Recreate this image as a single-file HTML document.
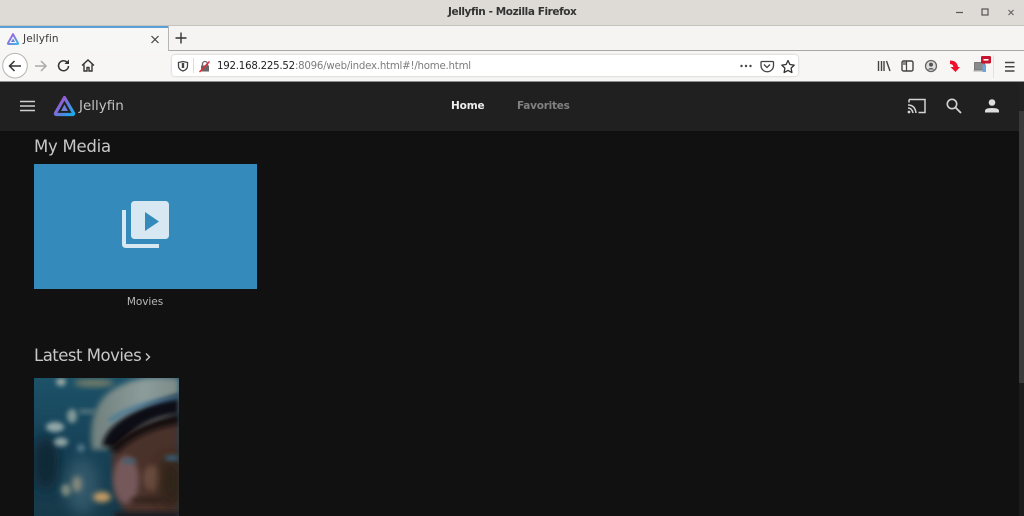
<!DOCTYPE html>
<html><head><meta charset="utf-8">
<style>
html,body{margin:0;padding:0;width:1024px;height:516px;overflow:hidden;background:#111}
body{position:relative;font-family:"DejaVu Sans","Liberation Sans",sans-serif}
div,span,svg{position:absolute;white-space:nowrap}
</style></head><body>
<div style="left:0;top:0;width:1024px;height:26px;background:#dedbd6"></div>
<div style="left:0;top:25px;width:1024px;height:1px;background:#c6c3bd"></div>
<div style="left:448px;top:5px;font:bold 10.5px 'DejaVu Sans',sans-serif;letter-spacing:-.42px;color:#333;line-height:15px">Jellyfin - Mozilla Firefox</div>
<svg style="left:950px;top:4px" width="74" height="16">
<path d="M6 8.500h7" stroke="#555" stroke-width="1.200"/><rect x="32" y="5" width="6" height="6" fill="none" stroke="#555" stroke-width="1.200"/><path d="M58.500 6l5 5M63.500 6l-5 5" stroke="#666" stroke-width="1.200"/></svg>

<div style="left:0;top:26px;width:1024px;height:25px;background:#f5f4f2"></div>
<div style="left:168px;top:50px;width:856px;height:1px;background:#a8a8a6"></div>
<div style="left:0;top:26px;width:168px;height:25px;background:#f7f7f6"></div>
<div style="left:0;top:26px;width:168px;height:2px;background:#5a9fd8"></div>
<div style="left:168px;top:26px;width:1px;height:25px;background:#b5b5b3"></div>
<svg style="left:6px;top:32px" width="14" height="14" viewBox="0 0 14 14"><defs><linearGradient id="g0" x1="0" y1="0" x2="1" y2="1"><stop offset="0" stop-color="#b050d8"/><stop offset="1" stop-color="#40b4ee"/></linearGradient></defs><path d="M7 2.200L12 11.200Q12.200 12 11.300 12H2.700Q1.800 12 2 11.200Z" fill="none" stroke="url(#g0)" stroke-width="2" stroke-linejoin="round"/><path d="M7 6.500L9 10H5Z" fill="#6a7fd8"/></svg>
<div style="left:23px;top:31px;font:10.500px/16px 'DejaVu Sans',sans-serif;letter-spacing:.1px;color:#3a3a3a">Jellyfin</div>
<svg style="left:149px;top:33px" width="12" height="13"><path d="M2.500 3l7 7M9.500 3l-7 7" stroke="#444" stroke-width="1.200"/></svg>
<svg style="left:174px;top:31px" width="14" height="14"><path d="M7 1.500v11M1.500 7h11" stroke="#333" stroke-width="1.400"/></svg>

<div style="left:0;top:51px;width:1024px;height:30px;background:#f7f6f5"></div>
<div style="left:0;top:81px;width:1024px;height:1px;background:#8f8f8d"></div>
<svg style="left:2px;top:52px" width="100" height="28" viewBox="0 0 100 28">
<circle cx="13" cy="13.700" r="12.300" fill="#fff" stroke="#b4b4b2" stroke-width="1"/>
<path d="M19 14H8M12.500 9l-5 5 5 5" fill="none" stroke="#333" stroke-width="1.500"/>
<path d="M44 14H33M39 9l5 5-5 5" fill="none" stroke="#aaa" stroke-width="1.500"/>
<path d="M66.500 14a5 5 0 1 1-1.700-4" fill="none" stroke="#333" stroke-width="1.500"/><path d="M67 7.500v4.500h-4.500z" fill="#333"/>
<path d="M80 13.500l6-5.500 6 5.500M82 12.500v6.500h3v-3.500h2v3.500h3v-6.500" fill="none" stroke="#333" stroke-width="1.400"/>
</svg>
<div style="left:172px;top:55px;width:626px;height:21px;background:#fff;border-radius:3px;box-shadow:0 0 2px rgba(0,0,0,.25)"></div>
<div style="left:193px;top:58px;width:1px;height:15px;background:#ddd"></div>
<svg style="left:176px;top:59px" width="14" height="14"><path d="M2.500 3.500L7 2.500 11.500 3.500v3.500q0 3.500-4.500 5Q2.500 10.500 2.500 7Z" fill="none" stroke="#444" stroke-width="1.300"/><path d="M7 4v5" stroke="#444" stroke-width="2.400"/></svg>
<svg style="left:198px;top:59px" width="14" height="14"><rect x="3" y="6.500" width="8" height="6" fill="#666"/><path d="M4.500 6.500V5a2.500 2.500 0 0 1 5 0v1.500" fill="none" stroke="#666" stroke-width="1.300"/><path d="M1.500 13L11.500 2.500" stroke="#e8293c" stroke-width="1.500"/></svg>
<div style="left:217px;top:59px;font:10.200px/16px 'DejaVu Sans',sans-serif;letter-spacing:-.22px;color:#222">192.168.225.52<span style="position:static;color:#7c7c7c">:8096/web/index.html#!/home.html</span></div>
<svg style="left:738px;top:58px" width="60" height="16">
<circle cx="3.500" cy="8" r="1.200" fill="#444"/><circle cx="8" cy="8" r="1.200" fill="#444"/><circle cx="12.500" cy="8" r="1.200" fill="#444"/>
<path d="M24 3.500h10.500q1 0 1 1v3a6 6 0 0 1-12.500 0V4.500q0-1 1-1Z" fill="none" stroke="#444" stroke-width="1.300"/><path d="M26 6.500l3 3 3-3" fill="none" stroke="#444" stroke-width="1.300"/>
<path d="M50 2.500l1.900 4 4.300.6-3.100 3 .8 4.400-3.900-2.100-3.900 2.100.8-4.400-3.100-3 4.300-.6Z" fill="none" stroke="#333" stroke-width="1.300" stroke-linejoin="round"/></svg>
<svg style="left:870px;top:52px" width="154" height="28" viewBox="0 0 154 28">
<path d="M8.500 9v10M11.500 9v10M14 9v10M16.500 9l3.500 10" fill="none" stroke="#444" stroke-width="1.400"/>
<rect x="32" y="9" width="11" height="10" rx="1.500" fill="none" stroke="#444" stroke-width="1.400"/><path d="M36.500 9v10" stroke="#444" stroke-width="1.200"/><rect x="33" y="10" width="3" height="3" fill="#888"/>
<circle cx="61" cy="14" r="5.500" fill="#ddd" stroke="#666" stroke-width="1.300"/><circle cx="61" cy="12.600" r="2" fill="#555"/><path d="M57.500 17.500q3.500-3 7 0z" fill="#555"/>
<path d="M80 8.500Q87 8.500 88 15h2L85.500 20 80.500 15h3Q83 12 80 12Z" fill="#ee0f2b"/>
<rect x="104.500" y="10.500" width="10" height="7.500" fill="#8a8a8a" stroke="#666" stroke-width=".8"/><rect x="103.500" y="18" width="11" height="1.500" fill="#aaa"/><rect x="112.500" y="12.500" width="3.500" height="7.500" fill="#6fa5d6"/>
<rect x="111" y="4" width="10" height="7.500" rx="1.200" fill="#c8132c"/><rect x="113.500" y="7" width="5" height="1.600" fill="#fff"/>
<path d="M123.500 3v23" stroke="#e2e2e0" stroke-width="1"/>
<path d="M135 10.500h9.500M135 14.800h9.500M135 19h9.500" stroke="#444" stroke-width="1.500"/></svg>

<div style="left:0;top:82px;width:1024px;height:49px;background:#202020"></div>
<svg style="left:20px;top:100px" width="16" height="12"><path d="M0 1.500h15M0 6h15M0 10.500h15" stroke="#d0d0d0" stroke-width="1.500"/></svg>
<svg style="left:52px;top:94px" width="26" height="24" viewBox="0 0 26 24"><defs><linearGradient id="g1" x1=".1" y1=".2" x2=".95" y2=".9"><stop offset="0" stop-color="#aa4fd0"/><stop offset="1" stop-color="#1fa8e8"/></linearGradient></defs><path d="M12.500 3.500L21.500 19Q22 20.500 20.500 20.500H4.500Q3 20.500 3.500 19Z" fill="none" stroke="url(#g1)" stroke-width="3.200" stroke-linejoin="round"/><path d="M12.500 10.500L16 17H9Z" fill="#6d7fd6"/></svg>
<div style="left:79px;top:97px;font:13.500px/18px 'DejaVu Sans',sans-serif;color:#c4c4c4">Jellyfin</div>
<div style="left:451px;top:99px;font:bold 10.500px/15px 'DejaVu Sans',sans-serif;letter-spacing:-.15px;color:#eee">Home</div>
<div style="left:517px;top:99px;font:bold 10.500px/15px 'DejaVu Sans',sans-serif;letter-spacing:-.25px;color:#808080">Favorites</div>
<svg style="left:906px;top:96px" width="22" height="20" viewBox="0 0 22 20"><path d="M3 3.500h16v13h-6.500" fill="none" stroke="#d3d3d3" stroke-width="1.500"/><path d="M3 3.500v3" stroke="#d3d3d3" stroke-width="1.500"/><path d="M2 9q7 0 8 8M2 12q4 0 5 5" fill="none" stroke="#d3d3d3" stroke-width="1.500"/><circle cx="3" cy="16" r="1.400" fill="#d3d3d3"/></svg>
<svg style="left:945px;top:97px" width="18" height="18"><circle cx="7" cy="7" r="4.700" fill="none" stroke="#d3d3d3" stroke-width="1.600"/><path d="M10.500 10.500L16 16" stroke="#d3d3d3" stroke-width="1.800"/></svg>
<svg style="left:984px;top:98px" width="16" height="16"><circle cx="8" cy="4.500" r="3.300" fill="#ddd"/><path d="M1 14.500v-1.500q0-3 7-3t7 3v1.500Z" fill="#ddd"/></svg>

<div style="left:0;top:131px;width:1019px;height:385px;background:#111"></div>
<div style="left:1019px;top:82px;width:5px;height:434px;background:#1c1c1c"></div>
<div style="left:1019px;top:82px;width:5px;height:29px;background:#222"></div>
<div style="left:1019px;top:111px;width:5px;height:272px;background:#3a3a3a"></div>

<div style="left:34px;top:136px;font:16.500px/22px 'DejaVu Sans',sans-serif;letter-spacing:-.25px;color:#c8c8c8">My Media</div>
<div style="left:34px;top:164px;width:223px;height:125px;background:#338abb"></div>
<svg style="left:120px;top:199px" width="52" height="52" viewBox="0 0 52 52"><path d="M4 11v34q0 2 2 2h33" fill="none" stroke="#d7e8f3" stroke-width="4"/><rect x="11" y="2" width="38" height="38" rx="3.500" fill="#d7e8f3"/><path d="M25 13v19l14-9.500Z" fill="#338abb"/></svg>
<div style="left:33.500px;top:295px;width:223px;text-align:center;font:10.500px/15px 'DejaVu Sans',sans-serif;letter-spacing:-.05px;color:#b8b8b8">Movies</div>
<div style="left:34px;top:345px;font:16.500px/22px 'DejaVu Sans',sans-serif;letter-spacing:-.5px;color:#c8c8c8">Latest Movies</div>
<svg style="left:144px;top:351px" width="8" height="12"><path d="M2 2.500l3.500 3.500-3.500 3.500" fill="none" stroke="#c8c8c8" stroke-width="1.400"/></svg>

<svg style="left:34px;top:378px" width="145" height="138" viewBox="0 0 145 138">
<defs>
<filter id="b3" x="-50%" y="-50%" width="200%" height="200%"><feGaussianBlur stdDeviation="3"/></filter>
<filter id="b2" x="-50%" y="-50%" width="200%" height="200%"><feGaussianBlur stdDeviation="2.500"/></filter>
<filter id="b6" x="-50%" y="-50%" width="200%" height="200%"><feGaussianBlur stdDeviation="7"/></filter>
<linearGradient id="bg" x1="0" y1="0" x2="0" y2="1"><stop offset="0" stop-color="#1c5268"/><stop offset=".5" stop-color="#174258"/><stop offset="1" stop-color="#173a4a"/></linearGradient>
<linearGradient id="cap" x1="0" y1="0" x2="1" y2="0"><stop offset="0" stop-color="#6f7f7c"/><stop offset=".6" stop-color="#8c9c9a"/><stop offset="1" stop-color="#7c8a88"/></linearGradient>
<clipPath id="c"><rect width="145" height="138"/></clipPath>
</defs>
<g clip-path="url(#c)">
<rect width="145" height="138" fill="url(#bg)"/>
<ellipse cx="12" cy="85" rx="14" ry="28" fill="#0d2636" filter="url(#b6)"/>
<ellipse cx="48" cy="108" rx="16" ry="28" fill="#33596a" filter="url(#b6)"/>
<ellipse cx="60" cy="5" rx="20" ry="4" fill="#6f7a68" filter="url(#b3)"/>
<ellipse cx="27" cy="4" rx="5" ry="4" fill="#98a8a4" filter="url(#b2)"/>
<ellipse cx="38" cy="38" rx="5" ry="7" fill="#809898" filter="url(#b2)"/>
<rect x="45" y="31" width="16" height="5" fill="#4f7078" filter="url(#b2)"/>
<ellipse cx="21" cy="49" rx="9" ry="5" fill="#92a8a8" filter="url(#b2)"/>
<ellipse cx="27" cy="64" rx="7" ry="4.500" fill="#90a4a4" filter="url(#b2)"/>
<ellipse cx="47" cy="70" rx="4" ry="4" fill="#50788a" filter="url(#b2)"/>
<ellipse cx="43" cy="106" rx="5" ry="8" fill="#88897a" filter="url(#b3)"/>
<ellipse cx="32" cy="112" rx="5" ry="6" fill="#7a887e" filter="url(#b2)"/>
<ellipse cx="68" cy="119" rx="9" ry="5" fill="#c89e64" filter="url(#b3)"/>
<path d="M58 72Q52 20 90 6Q110 -4 145 0V34L85 70Z" fill="url(#cap)" filter="url(#b3)"/>
<path d="M68 68Q72 38 145 16V36Q105 40 84 70Z" fill="#0f1113" filter="url(#b2)"/>
<path d="M75 43Q100 26 145 19" fill="none" stroke="#3f7698" stroke-width="3.500" filter="url(#b2)"/>
<path d="M78 76Q90 52 145 40V138H92Q78 110 78 76Z" fill="#4a322a" filter="url(#b3)"/>
<path d="M74 72Q96 46 145 36V46Q106 52 84 74Z" fill="#121010" filter="url(#b2)"/>
<ellipse cx="92" cy="102" rx="13" ry="24" fill="#75595a" filter="url(#b3)"/>
<ellipse cx="118" cy="100" rx="8" ry="13" fill="#6e4f42" filter="url(#b3)"/>
<ellipse cx="137" cy="104" rx="12" ry="26" fill="#2e2019" filter="url(#b6)"/>
<ellipse cx="95" cy="83" rx="7" ry="2.600" fill="#3f6074" filter="url(#b2)"/>
<ellipse cx="138" cy="80" rx="7" ry="2.600" fill="#35607c" filter="url(#b2)"/>
<ellipse cx="118" cy="122" rx="22" ry="3" fill="#33201a" filter="url(#b2)"/>
<rect x="80" y="134" width="65" height="6" fill="#1a1f22" filter="url(#b2)"/>
</g></svg>
</body></html>
